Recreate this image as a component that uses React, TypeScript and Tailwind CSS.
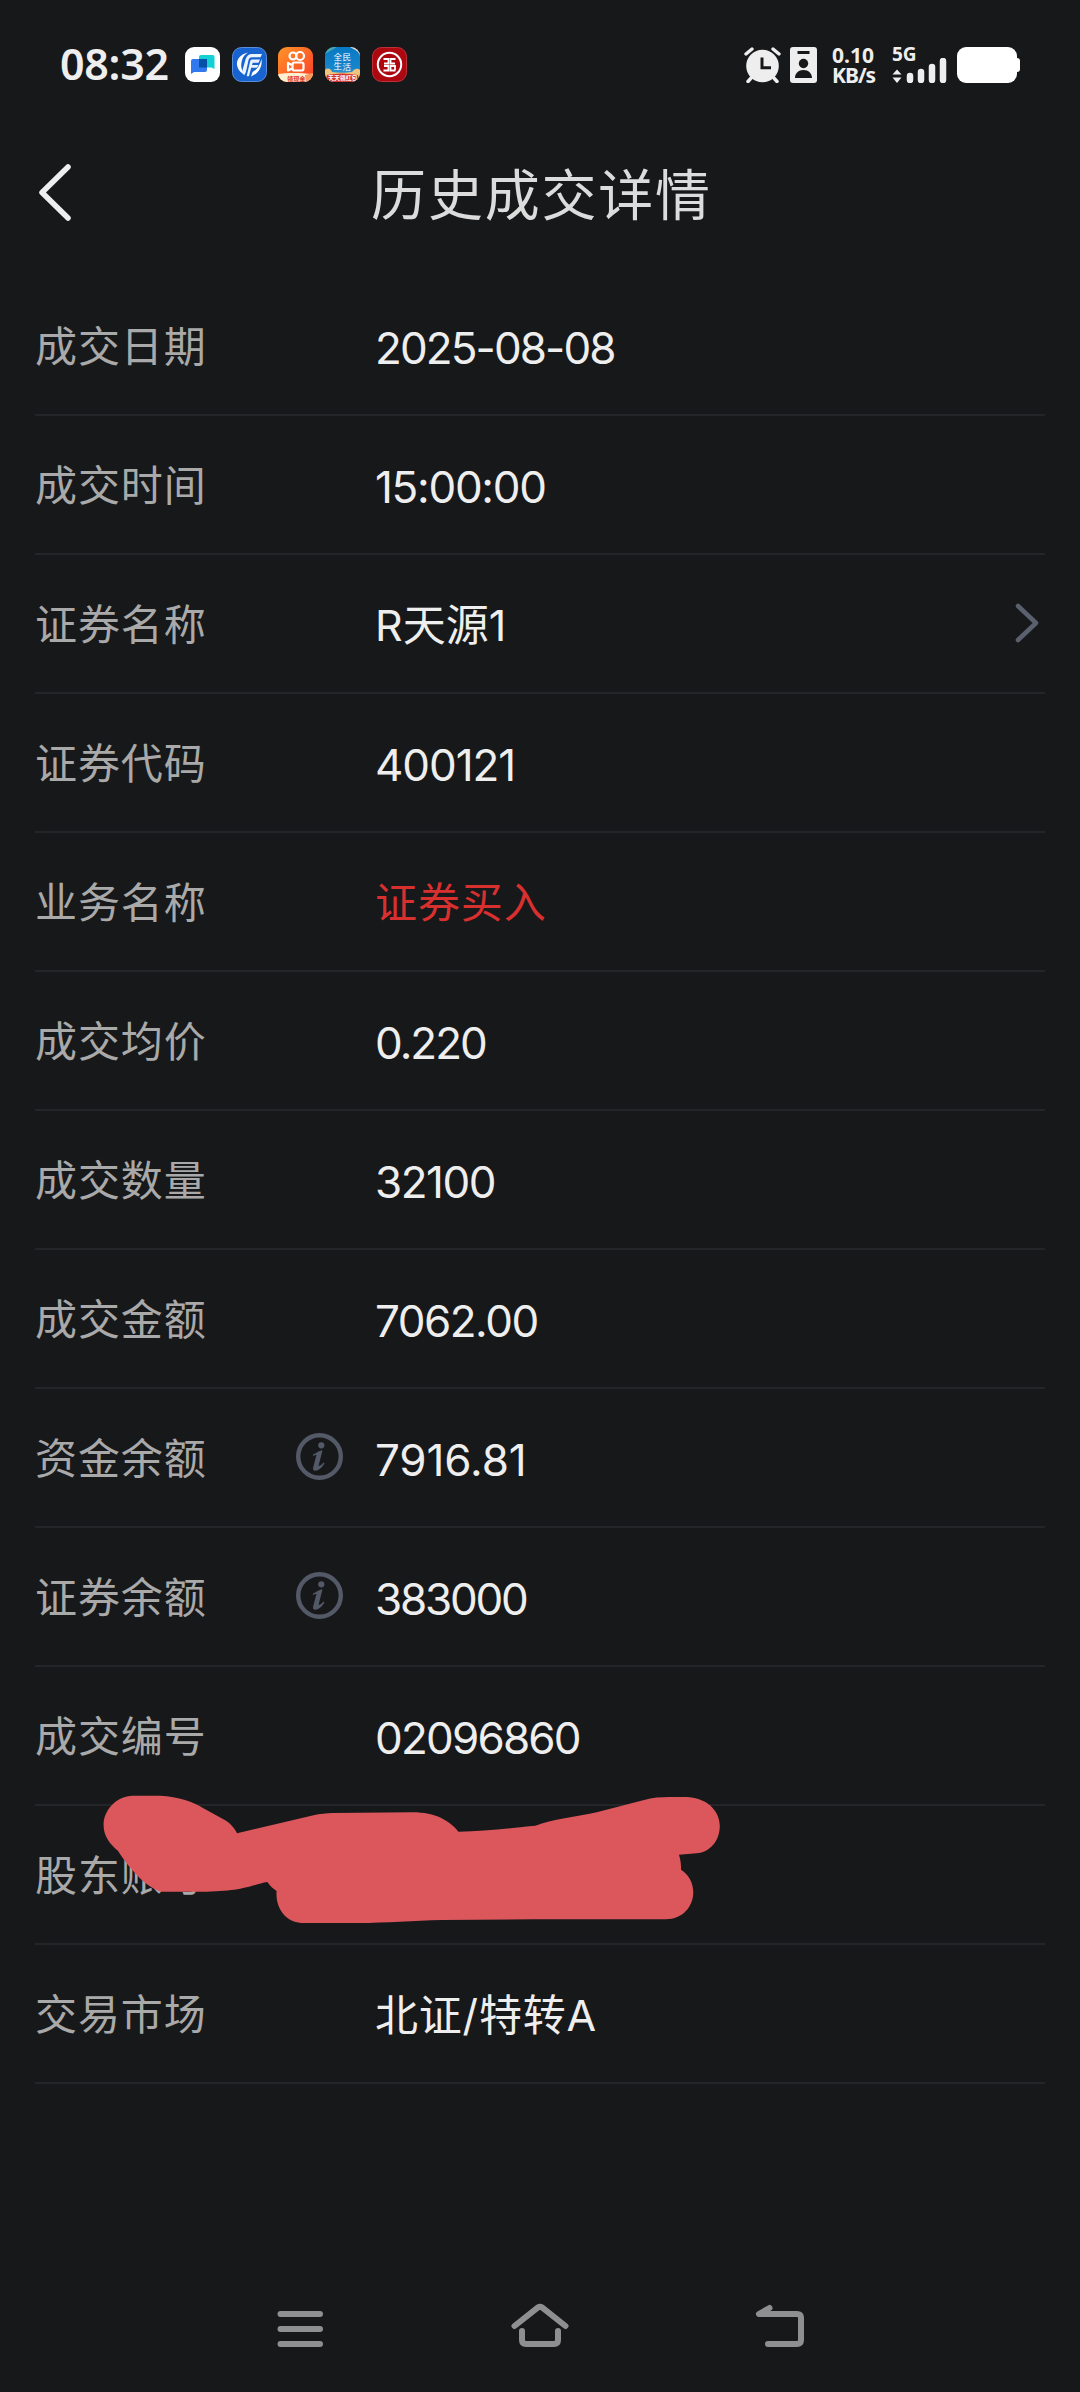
import React from 'react';

type Row = {
  label: string;
  value?: string;
  spacing?: string;
  cjk?: boolean;
  red?: boolean;
  info?: boolean;
  link?: boolean;
  hidden?: boolean;
};

const rows: Row[] = [
  { label: '成交日期', value: '2025-08-08', spacing: 'tracking-[-1.9px]' },
  { label: '成交时间', value: '15:00:00', spacing: 'tracking-[-1.3px]' },
  { label: '证券名称', value: 'R天源1', spacing: 'tracking-[0px]', cjk: true, link: true },
  { label: '证券代码', value: '400121', spacing: 'tracking-[-1.1px]' },
  { label: '业务名称', value: '证券买入', cjk: true, red: true },
  { label: '成交均价', value: '0.220', spacing: 'tracking-[-2px]' },
  { label: '成交数量', value: '32100', spacing: 'tracking-[-1.5px]' },
  { label: '成交金额', value: '7062.00', spacing: 'tracking-[-1.5px]' },
  { label: '资金余额', value: '7916.81', spacing: 'tracking-[-0.1px]', info: true },
  { label: '证券余额', value: '383000', spacing: 'tracking-[-2.2px]', info: true },
  { label: '成交编号', value: '02096860', spacing: 'tracking-[-1.8px]' },
  { label: '股东账号', hidden: true },
  { label: '交易市场', value: '北证/特转A', spacing: 'tracking-[0.8px]', cjk: true },
];

function ChatAppIcon() {
  return (
    <svg className="size-[35px]" viewBox="0 0 35 35">
      <rect width="35" height="35" rx="9" fill="#fff" />
      <path d="M16 8h11.500a2 2 0 0 1 2 2v12l-3-1.500H14V10a2 2 0 0 1 2-2z" fill="#12d0d3" />
      <path d="M8 12h14v11a2 2 0 0 1-2 2H9l-3 2V14a2 2 0 0 1 2-2z" fill="#2f78ee" />
      <path d="M14 12h8v8.500h-8z" fill="#0650a8" />
    </svg>
  );
}

function BrokerAppIcon() {
  return (
    <svg className="size-[35px]" viewBox="0 0 35 35">
      <rect x=".5" y=".5" width="34" height="34" rx="9" fill="#1763d0" stroke="#5a8fdc" />
      <path d="M16 5.500C7 7.500 3.500 14 5.500 20c1.200 3.800 4 6.500 7.500 7.500-3-3.500-4.500-7-3.500-12C10.300 11 12 8 16 5.500z" fill="#fff" />
      <path d="M20 7h10l-1.500 3.300H20c-2 0-3 1-3.500 3L14 24.500c-.5 2-1 3-2 3.500-1.500-1-1.800-3-1.300-5.500l2.800-10c1-3.500 3-5.500 6.500-5.500z" fill="#e9f2ff" />
      <path d="M20 12.500h8L26.500 15.800h-5.800l-.7 2.200h6.500c-.8 2-1.500 2.800-3.500 2.800h-3.800L17 29c-.8.500-1.800.3-2.300 0l3.300-14c.3-1.500.8-2.200 2-2.500z" fill="#e9f2ff" />
      <path d="M29.500 12c1 8-3 14.500-10.500 17.500l1.500-4.500c4.500-2 7.500-7 9-13z" fill="#fff" />
    </svg>
  );
}

function VideoAppIcon() {
  return (
    <svg className="size-[35px]" viewBox="0 0 35 35">
      <defs>
        <linearGradient id="video-bg" x1="0" y1="0" x2="1" y2="1">
          <stop offset="0" stopColor="#ff9626" />
          <stop offset="1" stopColor="#fb3a2a" />
        </linearGradient>
        <clipPath id="video-clip"><rect width="35" height="35" rx="9" /></clipPath>
      </defs>
      <g clipPath="url(#video-clip)">
        <rect width="35" height="35" fill="url(#video-bg)" />
        <g fill="none" stroke="#fff" strokeWidth="2.200">
          <circle cx="15" cy="9" r="3.500" />
          <circle cx="22" cy="9" r="4" />
          <rect x="14.500" y="15.500" width="11" height="8" rx="2" />
          <path d="M14 18l-4-2v7.500l4-2" strokeLinejoin="round" />
        </g>
        <path d="M0 27c8-1.500 22-1.500 35 0v8H0z" fill="#fff0d0" />
        <path d="M27 28l8-2v9h-7z" fill="#f99a58" />
        <text x="9" y="33.500" fontSize="6.200" fontWeight="700" fill="#e0352b" className="font-['Noto_Sans_CJK_SC',sans-serif]">领现金</text>
      </g>
    </svg>
  );
}

function LifeAppIcon() {
  return (
    <svg className="size-[35px]" viewBox="0 0 35 35">
      <defs>
        <linearGradient id="life-bg" x1="0" y1="0" x2="0" y2="1">
          <stop offset="0" stopColor="#0879c4" />
          <stop offset=".6" stopColor="#1685cc" />
          <stop offset="1" stopColor="#6ab7c8" />
        </linearGradient>
        <clipPath id="life-clip"><rect width="35" height="35" rx="9" /></clipPath>
      </defs>
      <g clipPath="url(#life-clip)">
        <rect width="35" height="35" fill="url(#life-bg)" />
        <path d="M0 0h12L0 7z" fill="#49a7b0" />
        <path d="M25 0h10v9c-1-5-5-6-10-9z" fill="#f6ded3" />
        <path d="M29 0h6v5z" fill="#d6453b" />
        <path d="M0 23c3-3 6-1 7 2 6 1 14 1 20 0 3-4 6-4 8-2v12H0z" fill="#efc57f" />
        <path d="M2 28q15-3 31 0l2 7H0z" fill="#d4342a" />
        <g fill="#fff" className="font-['Noto_Sans_CJK_SC',sans-serif]">
          <text x="8.500" y="12.500" fontSize="8.500">全</text>
          <text x="17.500" y="13" fontSize="8.500">民</text>
          <text x="8.500" y="22" fontSize="8.500">生</text>
          <text x="17.500" y="22.500" fontSize="8.500">活</text>
          <text x="3" y="33" fontSize="5.900" fontWeight="700">天天領红包</text>
        </g>
      </g>
    </svg>
  );
}

function BankAppIcon() {
  return (
    <svg className="size-[35px]" viewBox="0 0 35 35">
      <rect x=".5" y=".5" width="34" height="34" rx="9" fill="#ad0710" stroke="#bd3037" />
      <g fill="none" stroke="#fff" strokeWidth="1.800">
        <circle cx="17.500" cy="17.500" r="11.700" strokeWidth="2" />
        <path d="M11.500 12h5v4.500h-4.500M11.500 23.500h5V19h-4.500" />
        <path d="M23.500 12h-5v4.500H23M23.500 23.500h-5V19H23v4" />
      </g>
    </svg>
  );
}

function StatusBar() {
  return (
    <header className="flex h-[130px] items-start justify-between pt-[47px] pr-[60px] pl-[60px] text-[#eeeeee]">
      <div className="flex">
        <span className="-mt-[5px] w-[125px] font-['Noto_Sans',sans-serif] text-[43px] leading-[44px] font-semibold tracking-[-0.3px]">08:32</span>
        <div className="flex gap-[11.7px]">
          <ChatAppIcon />
          <BrokerAppIcon />
          <VideoAppIcon />
          <LifeAppIcon />
          <BankAppIcon />
        </div>
      </div>
      <div className="flex">
        <svg className="mr-[9px] h-9 w-[37px]" viewBox="0 0 37 36">
          <circle cx="18.500" cy="19" r="16.300" fill="#eee" />
          <path d="M2 7l6-5M35 7l-6-5M8 30l-4 4.500M29 30l4 4.500" stroke="#eee" strokeWidth="3.400" strokeLinecap="round" />
          <path d="M18 10.500v10.200h9" fill="none" stroke="#17181a" strokeWidth="3" />
        </svg>
        <svg className="mr-[15px] h-9 w-[27px]" viewBox="0 0 27 36">
          <rect width="27" height="36" rx="3" fill="#eee" />
          <path d="M7.500 4h12v3h-12zM5 31c0-4.500 3.500-8 8.500-8s8.500 3.500 8.500 8z" fill="#17181a" />
          <circle cx="13.500" cy="16.500" r="4.700" fill="#17181a" />
        </svg>
        <div className="flex w-[60px] flex-col font-['Noto_Sans',sans-serif] text-[21px] leading-[20px] font-bold">
          <span className="-mt-0.5">0.10</span>
          <span className="tracking-[-1px]">KB/s</span>
        </div>
        <div className="flex w-[65px] flex-col font-['Noto_Sans',sans-serif] text-[19px] leading-[15px] font-bold">
          <span>5G</span>
          <svg className="-mt-1 h-[25px] w-[55px]" viewBox="0 0 55 25">
            <path d="M5 11.500l4.500 5h-9zM5 25l4.500-5.500h-9z" fill="#eee" />
            <path d="M18 18v4M29 14v8M40 9v13M51 3v19" stroke="#eee" strokeWidth="6.500" strokeLinecap="round" />
          </svg>
        </div>
        <svg className="h-9 w-[63px]" viewBox="0 0 63 36">
          <rect width="60" height="36" rx="9" fill="#fff" />
          <rect x="50" y="11" width="13" height="14" rx="3" fill="#fff" />
        </svg>
      </div>
    </header>
  );
}

function InfoIcon() {
  return (
    <svg className="-mt-[2px] ml-px size-[47px]" viewBox="0 0 47 47">
      <circle cx="23.500" cy="23.500" r="21.300" fill="none" stroke="#535967" strokeWidth="4.400" />
      <circle cx="25.300" cy="12.300" r="3.100" fill="#535967" />
      <path d="M17 21.500c3-1.500 5.500-3 8-4h1.500l-4 15.500c2-.5 4-2 5-3.500l1 .8c-2 4-6 7.500-9.500 7.500-1.800 0-2.300-1.500-1.800-3.500l3.300-12.500c-1 .2-2.200.6-3.500 1.200z" fill="#535967" />
    </svg>
  );
}

// Marker stroke drawn over the account number
function Redaction() {
  return (
    <svg className="absolute -top-[26px] left-[45px] h-[160px] w-[660px]" viewBox="0 0 1568 480" preserveAspectRatio="none">
      <path
        d="M125 47H190C235 50 270 65 292 84L345 121C360 133 368 147 373 160L555 106C570 101 585 100 600 99L790 97C845 97 878 122 899 155C960 155 1030 143 1082 137C1120 118 1180 110 1230 96L1340 60C1360 53 1380 51 1400 51H1440C1487 52 1520 90 1520 138C1520 182 1497 217 1465 220L1423 224C1427 238 1428 255 1428 269C1446 284 1457 308 1457 337C1457 380 1432 418 1392 418H1080L860 420C790 422 730 429 660 429H525C489 426 464 386 467 333C458 326 451 317 445 306C415 312 390 334 300 335H195C165 328 125 280 90 212C69 190 56 167 56 135C56 88 88 48 125 47Z"
        fill="#db575c"
      />
    </svg>
  );
}

function DetailRow({ row }: { row: Row }) {
  return (
    <li className="relative flex h-[139px] items-center border-b-2 border-[#242528]">
      <span className="w-[260px] pb-[3px] text-[42px] leading-[60px] tracking-[0.9px] whitespace-nowrap text-[#a9a9a9]">{row.label}</span>
      <span className="w-[80px]">{row.info && <InfoIcon />}</span>
      {row.value && (
        <span
          className={
            row.red
              ? 'flex-1 pb-[3px] text-[42px] leading-[60px] tracking-[0.9px] text-[#d8302f]'
              : row.cjk
                ? `flex-1 pt-[2px] font-['Inter','Noto_Sans_CJK_SC',sans-serif] text-[43px] leading-[60px] text-[#eeeeee] ${row.spacing}`
                : `flex-1 pt-[4px] font-['Inter',sans-serif] text-[44px] leading-[60px] text-[#eeeeee] ${row.spacing}`
          }
        >
          {row.value}
        </span>
      )}
      {row.link && (
        <svg className="mr-[6px] -mt-[2px] h-10 w-6" viewBox="0 0 24 40">
          <path d="M3 3l18 17L3 37" fill="none" stroke="#5a606d" strokeWidth="4.500" strokeLinecap="round" strokeLinejoin="round" />
        </svg>
      )}
      {row.hidden && <Redaction />}
    </li>
  );
}

function NavBar() {
  return (
    <nav className="flex h-[130px] items-center justify-between px-[270px]">
      <svg className="h-[60px] w-[60px]" viewBox="0 0 60 60">
        <path d="M10.500 17h39.500M10.500 32h39.500M10.500 47h39.500" stroke="#8e8f91" strokeWidth="6" strokeLinecap="round" />
      </svg>
      <svg className="h-[60px] w-[60px]" viewBox="0 0 60 60">
        <path d="M4.500 29L28 10.500q2-1.500 4 0L55.500 29M12 34v9q0 4 4 4h28q4 0 4-4v-9" fill="none" stroke="#8e8f91" strokeWidth="6" strokeLinecap="round" />
      </svg>
      <svg className="h-[60px] w-[60px]" viewBox="0 0 60 60">
        <path d="M29.500 11L19 17h38q4 0 4 4v22q0 4-4 4H28" transform="translate(-10 0)" fill="none" stroke="#8e8f91" strokeWidth="6" strokeLinecap="round" strokeLinejoin="round" />
      </svg>
    </nav>
  );
}

export default function App() {
  return (
    <div className="flex h-[2392px] w-[1080px] flex-col overflow-hidden bg-[#17181a] font-['Noto_Sans_CJK_SC',sans-serif]">
      <StatusBar />
      <div className="grid h-[147px] grid-cols-[1fr_auto_1fr] items-start">
        <svg className="mt-[34px] ml-[39px] h-[57px] w-8" viewBox="0 0 32 57">
          <path d="M29 3L3 28.500 29 54" fill="none" stroke="#eee" strokeWidth="5.500" strokeLinecap="round" strokeLinejoin="round" />
        </svg>
        <h1 className="mt-[21px] pl-[3px] text-[55px] leading-[80px] tracking-[1.800px] text-[#dcdcdc]">历史成交详情</h1>
      </div>
      <ul className="px-[35px]">
        {rows.map((row) => (
          <DetailRow key={row.label} row={row} />
        ))}
      </ul>
      <div className="flex-1" />
      <NavBar />
    </div>
  );
}
